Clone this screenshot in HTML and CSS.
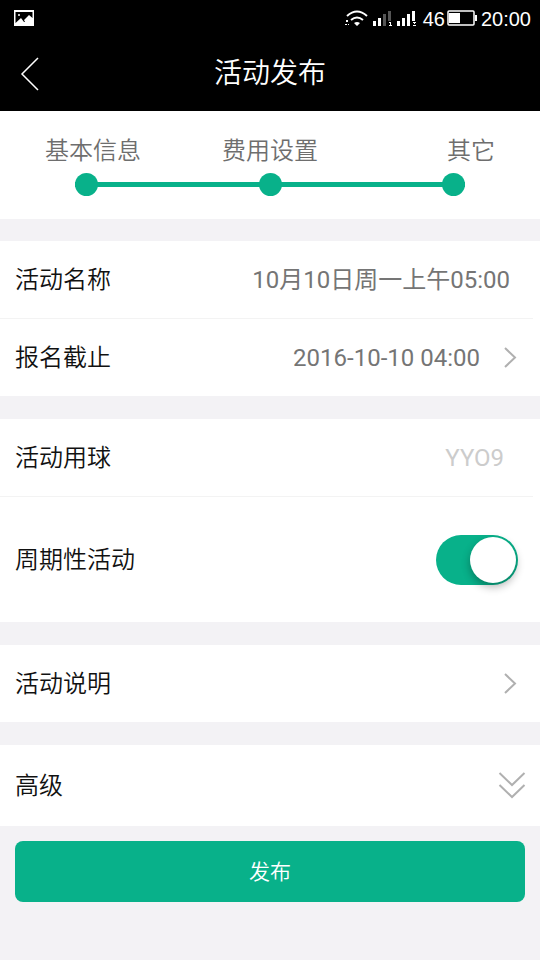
FILE: index.html
```html
<!DOCTYPE html>
<html lang="zh-CN">
<head>
<meta charset="utf-8">
<meta name="viewport" content="width=device-width, initial-scale=1">
<title>活动发布</title>
<link rel="stylesheet" href="styles.css">
</head>
<body>
<header class="top">
  <div class="status">
    <svg class="status-picture" width="20" height="16" viewBox="0 0 20 16" aria-hidden="true">
      <path fill="#fff" fill-rule="evenodd" d="M0 0h20v16H0zM1.500 2v11l5.500-5 3 4 1 0-1-2 5-5 3.500 3V2z"/>
      <circle cx="5" cy="5" r="1" fill="#fff"/>
    </svg>
    <svg width="24" height="18" viewBox="0 0 24 18" aria-hidden="true">
      <g fill="none" stroke="#fff" stroke-width="2">
        <path d="M2 7Q12-2 22 7"/>
        <path d="M6 11Q12 6 18 11"/>
      </g>
      <path fill="#fff" d="M9 14q3-2 6 0l-3 3zM1 11h2v2H1zM0 15h2v1H0zM3 15h1v1H3z"/>
    </svg>
    <svg class="signal" width="20" height="18" viewBox="0 0 20 18" aria-hidden="true">
      <path fill="#fff" d="M0 12h3v5H0zM5 9h3v8H5zM16 13h2v1h-2zM17 14h1v2h-1zM16 16h3v1h-3z"/>
      <path fill="#555" d="M10 5h3v12h-3zM15 2h3v10h-3z"/>
    </svg>
    <svg class="signal" width="20" height="18" viewBox="0 0 20 18" aria-hidden="true">
      <path fill="#fff" d="M0 12h3v5H0zM5 9h3v8H5zM10 5h3v12h-3zM15 2h3v10h-3zM16 13h3v1h-3zM17 14h1v1h-1zM16 16h3v1h-3z"/>
    </svg>
    <span class="charge">46</span>
    <svg class="battery" width="30" height="16" viewBox="0 0 30 16" aria-hidden="true">
      <rect x="1" y="1" width="26" height="14" rx="1" fill="none" stroke="#fff" stroke-width="1.500"/>
      <path fill="#fff" d="M2 3h11v10H2zM28 5h2v6h-2z"/>
    </svg>
    <time>20:00</time>
  </div>
  <div class="bar">
    <button class="back" type="button" aria-label="返回">
      <svg width="20" height="34" viewBox="0 0 20 34" aria-hidden="true"><path d="M18 1L2 17l16 16" fill="none" stroke="#fff" stroke-width="1.500"/></svg>
    </button>
    <h1>活动发布</h1>
  </div>
</header>

<form>
  <section class="steps">
    <ol class="step-names">
      <li>基本信息</li>
      <li>费用设置</li>
      <li>其它</li>
    </ol>
    <div class="track"><i></i><i></i><i></i></div>
  </section>

  <section class="card">
    <div class="row divided">
      <label for="name">活动名称</label>
      <input class="value" id="name" type="text" value="10月10日周一上午05:00">
    </div>
    <button class="row" type="button">
      <span>报名截止</span>
      <span class="value deadline">2016-10-10 04:00</span>
      <svg class="chevron" width="14" height="22" viewBox="0 0 14 22" aria-hidden="true"><path d="M2 1l10 9.500L2 20"/></svg>
    </button>
  </section>

  <section class="card">
    <div class="row divided">
      <label for="ball">活动用球</label>
      <input class="value ball" id="ball" type="text" placeholder="YYO9">
    </div>
    <div class="row tall">
      <label for="repeat">周期性活动</label>
      <input class="switch" id="repeat" type="checkbox" role="switch" checked>
    </div>
  </section>

  <section class="card">
    <button class="row" type="button">
      <span>活动说明</span>
      <svg class="chevron" width="14" height="22" viewBox="0 0 14 22" aria-hidden="true"><path d="M2 1l10 9.500L2 20"/></svg>
    </button>
  </section>

  <section class="card">
    <button class="row advanced" type="button">
      <span>高级</span>
      <svg class="chevron" width="28" height="28" viewBox="0 0 28 28" aria-hidden="true"><path d="M1.500 1L14 13 26.500 1M1.500 13L14 25l12.500-12"/></svg>
    </button>
  </section>

  <button class="submit" type="submit">发布</button>
</form>
</body>
</html>
```
FILE: styles.css
```css
* {
  box-sizing: border-box;
}

body {
  margin: 0;
  background: #f3f2f5;
  color: #111;
  font: 350 24px/36px Roboto, "Noto Sans CJK SC", sans-serif;
}

button,
input {
  margin: 0;
  padding: 0;
  border: 0;
  background: none;
  color: inherit;
  font: inherit;
}

svg {
  display: block;
  flex: none;
}

.top {
  background: #000;
  color: #fff;
}

.status {
  display: flex;
  align-items: center;
  height: 36px;
  padding: 0 9px 0 14px;
  font: 20px/24px "Liberation Sans", sans-serif;
}

.status-picture {
  margin-right: auto;
}

.signal {
  margin-left: 4px;
}

.charge {
  margin: 2px 2px 0 6px;
}

.status time {
  margin: 2px 0 0 4px;
}

.bar {
  display: grid;
  grid-template-columns: 1fr auto 1fr;
  align-items: center;
  height: 75px;
}

.back {
  justify-self: start;
  padding: 0 20px;
}

h1 {
  margin: 0;
  font-size: 28px;
  font-weight: 350;
}

.steps {
  padding: 22px 0;
  margin-bottom: 22px;
  background: #fff;
}

.step-names {
  display: grid;
  grid-template-columns: 1fr auto 1fr;
  margin: 0;
  padding: 0 45px;
  color: #6e6e6e;
  list-style: none;
}

.step-names li:last-child {
  text-align: right;
}

.track {
  display: flex;
  justify-content: space-between;
  margin: 4px 75px 0;
  padding-bottom: 1px;
  background: linear-gradient(#08b18a, #08b18a) center 9px / 100% 5px no-repeat;
}

.track i {
  width: 23px;
  height: 23px;
  border-radius: 50%;
  background: #08b18a;
}

.card {
  margin-bottom: 23px;
  background: #fff;
}

.row {
  display: flex;
  align-items: center;
  width: 100%;
  height: 77px;
  padding: 0 23px 0 15px;
  text-align: left;
}

.divided {
  height: 78px;
  padding-right: 30px;
  background: linear-gradient(#f3f3f3, #f3f3f3) left bottom / calc(100% - 7px) 1px no-repeat;
}

.tall {
  height: 125px;
  padding-right: 22px;
}

.advanced {
  height: 81px;
  padding-right: 14px;
}

.value {
  flex: 1;
  min-width: 0;
  color: #757575;
  font-weight: 400;
  text-align: right;
}

.deadline {
  margin-right: 23px;
}

.ball {
  padding-right: 6px;
}

.ball::placeholder {
  color: #ccc;
  opacity: 1;
}

.chevron {
  margin-left: auto;
  fill: none;
  stroke: #b0b0b0;
  stroke-width: 2;
}

.switch {
  appearance: none;
  width: 82px;
  height: 50px;
  margin-left: auto;
  padding: 2px;
  border-radius: 25px;
  background: #ccc;
}

.switch::before {
  content: "";
  display: block;
  width: 46px;
  height: 46px;
  border-radius: 50%;
  background: #fff;
  box-shadow: 0 4px 8px rgba(0, 0, 0, 0.3);
}

.switch:checked {
  background: #08b18a;
}

.switch:checked::before {
  margin-left: auto;
}

.card:last-of-type {
  margin-bottom: 15px;
}

.submit {
  display: block;
  width: calc(100% - 30px);
  height: 61px;
  margin: 0 15px;
  border-radius: 8px;
  background: #08b18a;
  color: #fff;
  font-size: 21px;
}
```
